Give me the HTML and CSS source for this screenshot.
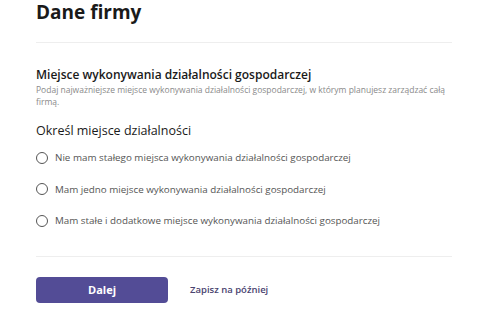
FILE: index.html
```html
<!DOCTYPE html>
<html>
    <head>
        <title>Dane firmy</title>
        <link rel="stylesheet" href="styles.css">
    </head>
    <body>
        <div class="page">
            <h1 class="title">Dane firmy</h1>
            <div class="section">
                <h2 class="sectionTitle">Miejsce wykonywania działalności gospodarczej</h2>
                <p class="hint">Podaj najważniejsze miejsce wykonywania działalności gospodarczej, w którym planujesz zarządzać całą firmą.</p>
                <h3 class="question">Określ miejsce działalności</h3>
                <label class="option"><span class="radio"></span>Nie mam stałego miejsca wykonywania działalności gospodarczej</label>
                <label class="option"><span class="radio"></span>Mam jedno miejsce wykonywania działalności gospodarczej</label>
                <label class="option"><span class="radio"></span>Mam stałe i dodatkowe miejsce wykonywania działalności gospodarczej</label>
            </div>
            <div class="actions">
                <a href="#" class="btn">Dalej</a>
                <a href="#" class="later">Zapisz na później</a>
            </div>
        </div>
    </body>
</html>
```
FILE: styles.css
```css
html,body{
    margin:0;
    padding:0;
    background:#ffffff;
    font-family:"Open Sans",sans-serif;
    color:#1a1a1a;
}
.page{
    width:416px;
    margin-left:36px;
}
.title{
    margin:0;
    height:42px;
    font-size:19px;
    font-weight:700;
    line-height:24px;
    border-bottom:1px solid #eeeeee;
}
.section{
    padding:24px 0 19px;
    border-bottom:1px solid #eeeeee;
}
.sectionTitle{
    margin:0;
    font-size:12px;
    font-weight:600;
    line-height:16px;
}
.hint{
    margin:1px 0 0;
    font-size:8.5px;
    line-height:12px;
    color:#8a8a8a;
}
.question{
    margin:15px 0 3px;
    font-size:12.5px;
    font-weight:500;
    line-height:16px;
}
.option{
    display:flex;
    align-items:center;
    height:31.5px;
    font-size:9.8px;
    color:#555555;
}
.radio{
    width:10px;
    height:10px;
    border:1px solid #555555;
    border-radius:50%;
    margin-right:7px;
}
.actions{
    display:flex;
    align-items:center;
    padding-top:20px;
}
.btn{
    display:flex;
    align-items:center;
    justify-content:center;
    width:132px;
    height:26px;
    border-radius:4px;
    background:#534c96;
    color:#ffffff;
    font-size:11px;
    font-weight:700;
    text-decoration:none;
}
.later{
    margin-left:22px;
    font-size:9.5px;
    font-weight:600;
    color:#4a4470;
    text-decoration:none;
}
```
